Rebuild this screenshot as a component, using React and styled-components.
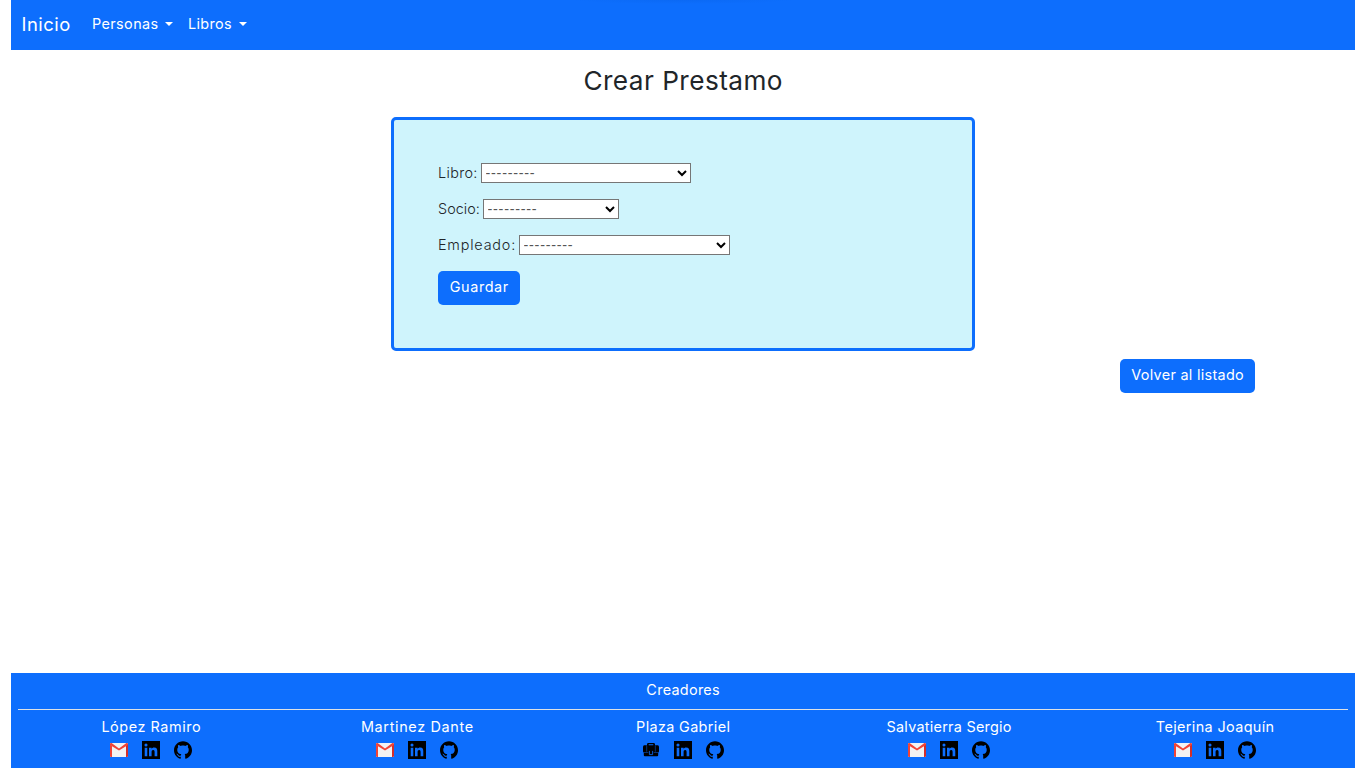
import React from "react";
import styled, { createGlobalStyle } from "styled-components";
import { SiGithub } from "react-icons/si";

const GlobalStyle = createGlobalStyle`
  *, *::before, *::after { box-sizing: border-box; }
  body {
    margin: 0;
    background: #fff;
    color: #212529;
    font-family: Inter, "Open Sans", sans-serif;
    font-size: 14.4px;
    line-height: 21.6px;
  }
`;

const Page = styled.div`
  display: flex;
  flex-direction: column;
  height: 100vh;
  padding: 0 11px;
  overflow: hidden;
`;

const Navbar = styled.nav`
  display: flex;
  align-items: center;
  height: 50px;
  padding: 0 10.5px 2px;
  background: radial-gradient(ellipse 110px 4px at 50% 0, #0b69f4, #0d6efd) #0d6efd;
  color: #fff;
  flex: none;
`;

const Text = styled.span`
  display: inline-block;
  white-space: nowrap;
  letter-spacing: ${(p) => p.$track || 0}px;
  margin-right: ${(p) => -(p.$track || 0)}px;
`;

const Brand = styled.a`
  width: 70.5px;
  font-size: 18.4px;
  line-height: 27px;
`;

const NavItem = styled.a`
  display: flex;
  align-items: center;
  width: ${(p) => p.$width}px;
  margin-right: 15px;
`;

const Caret = styled.i`
  margin-left: auto;
  border: 4.3px solid transparent;
  border-top-color: #fff;
  border-bottom: 0;
`;

const Main = styled.main`
  flex: 1;
  display: flex;
  flex-direction: column;
  align-items: center;
`;

const Title = styled.h1`
  margin: 15px 0 21px;
  font-size: 26.2px;
  line-height: 31px;
  font-weight: 400;
`;

const FormCard = styled.form`
  display: flex;
  flex-direction: column;
  align-items: flex-start;
  gap: 16px;
  width: 584px;
  height: 234px;
  padding: 43px 44px;
  border: 3px solid #0d6efd;
  border-radius: 5px;
  background: #cff4fc;
`;

const Field = styled.label`
  display: flex;
  align-items: center;
  height: 20px;
  font-weight: 300;
`;

const FieldName = styled.span`
  width: ${(p) => p.$width}px;
`;

const SelectBox = styled.span`
  position: relative;
  display: flex;
  width: ${(p) => p.$width}px;

  svg {
    position: absolute;
    right: 4px;
    top: 6px;
    width: 10px;
    height: 8px;
    pointer-events: none;
  }
`;

const Select = styled.select`
  appearance: none;
  width: 100%;
  height: 20px;
  padding: 0 16px 0 3.5px;
  border: 1px solid #767676;
  border-radius: 0;
  background-color: #fff;
  color: #555;
  font: 14.4px "Liberation Sans", sans-serif;
  letter-spacing: 0.75px;
`;

const Button = styled.button`
  width: ${(p) => p.$width}px;
  height: 34px;
  padding: 0 0 2px;
  border: 0;
  border-radius: 5px;
  background: #0d6efd;
  color: #fff;
  font: inherit;
`;

const BackRow = styled.div`
  display: flex;
  justify-content: flex-end;
  align-self: stretch;
  padding: 8px 100px 0 0;
`;

const Footer = styled.footer`
  flex: none;
  height: 95px;
  padding: 0 7px;
  background: #0d6efd;
  color: #fff;
  text-align: center;
`;

const FooterTitle = styled.div`
  height: 37px;
  padding-top: 6px;
  border-bottom: 1px solid #dee2e6;
`;

const Creators = styled.div`
  display: grid;
  grid-template-columns: repeat(5, 1fr);
  padding-top: 6px;
`;

const Icons = styled.div`
  display: flex;
  justify-content: center;
  gap: 14px;
  padding-top: 3px;
  color: #000;

  svg { display: block; width: 18px; height: 18px; }
`;

function MailIcon() {
  return (
    <svg viewBox="0 0 18 18">
      <path d="M1 2h16q1 0 1 1v12q0 1-1 1H1q-1 0-1-1V3q0-1 1-1z" fill="#f2f2f2" />
      <path d="M0 3q0-1 1-1h.6L9 7.4 16.4 2h.6q1 0 1 1v1L9 9.6 0 4z" fill="#f14336" />
      <path d="M0 3.5l2 1.4V16H1q-1 0-1-1z" fill="#f14336" />
      <path d="M18 3.5l-2 1.4V16h1q1 0 1-1z" fill="#d32e2a" />
    </svg>
  );
}

function BriefcaseIcon() {
  return (
    <svg viewBox="0 0 18 18">
      <path
        fillRule="evenodd"
        d="M2.2 4.2H5V3.4Q5 2 6.4 2h5.2Q13 2 13 3.4v.8h2.8q1.2 0 1.2 1.8v4.2q0 1-.8 1.2v2.8q0 1-1 1H2.8q-1 0-1-1v-2.8Q1 11.200 1 10.200V6q0-1.800 1.200-1.800zM6.700 4.200h4.600v-.9H6.700z"
      />
      <path
        d="M4.700 4.500v6.200M13.300 4.500v6.200M2 11.500h4.300M11.700 11.500H16"
        stroke="#0d6efd"
        strokeWidth=".6"
        opacity=".75"
      />
      <path d="M7.400 9.900v3.700h3.200V9.900" fill="none" stroke="#0d6efd" strokeWidth=".8" />
    </svg>
  );
}

function LinkedinIcon() {
  return (
    <svg viewBox="0 0 18 18">
      <path
        fillRule="evenodd"
        d="M0 0h18v18H0zM2.7 6.8v8.5h2.6V6.8zM4 2.5a1.5 1.5 0 1 0 0 3.1 1.5 1.5 0 0 0 0-3.1zM7 6.8v8.5h2.6V11c0-1.2.4-2.1 1.6-2.1 1.3 0 1.4 1.1 1.4 2.2v4.2h2.7v-4.7c0-2.4-.6-4-3.2-4-1.2 0-2.1.6-2.5 1.3V6.8z"
      />
    </svg>
  );
}

function ChevronIcon() {
  return (
    <svg viewBox="0 0 10 8">
      <path d="M1 2l4 4 4-4" fill="none" stroke="#000" strokeWidth="2" />
    </svg>
  );
}

const creators = [
  { name: "López Ramiro", track: 0.57 },
  { name: "Martinez Dante", track: 0.66 },
  { name: "Plaza Gabriel", briefcase: true, track: 0.36 },
  { name: "Salvatierra Sergio", track: 0.26 },
  { name: "Tejerina Joaquín", track: 0.38 },
];

const fields = [
  { name: "Libro:", label: 43, select: 210, track: 0.35 },
  { name: "Socio:", label: 45, select: 136, track: 0.05 },
  { name: "Empleado:", label: 81, select: 211, track: 0.8 },
];

export default function App() {
  return (
    <Page>
      <GlobalStyle />
      <Navbar>
        <Brand><Text $track={0.5}>Inicio</Text></Brand>
        <NavItem $width={81}><Text $track={0.4}>Personas</Text><Caret /></NavItem>
        <NavItem $width={59}><Text $track={0.35}>Libros</Text><Caret /></NavItem>
      </Navbar>
      <Main>
        <Title><Text $track={0.45}>Crear Prestamo</Text></Title>
        <FormCard>
          {fields.map((f) => (
            <Field key={f.name}>
              <FieldName $width={f.label}><Text $track={f.track}>{f.name}</Text></FieldName>
              <SelectBox $width={f.select}>
                <Select><option>---------</option></Select>
                <ChevronIcon />
              </SelectBox>
            </Field>
          ))}
          <Button type="button" $width={82}><Text $track={0.6}>Guardar</Text></Button>
        </FormCard>
        <BackRow>
          <Button type="button" $width={135}><Text $track={0.3}>Volver al listado</Text></Button>
        </BackRow>
      </Main>
      <Footer>
        <FooterTitle><Text $track={0.3}>Creadores</Text></FooterTitle>
        <Creators>
          {creators.map((c) => (
            <div key={c.name}>
              <Text $track={c.track}>{c.name}</Text>
              <Icons>
                {c.briefcase ? <BriefcaseIcon /> : <MailIcon />}
                <LinkedinIcon />
                <SiGithub />
              </Icons>
            </div>
          ))}
        </Creators>
      </Footer>
    </Page>
  );
}
